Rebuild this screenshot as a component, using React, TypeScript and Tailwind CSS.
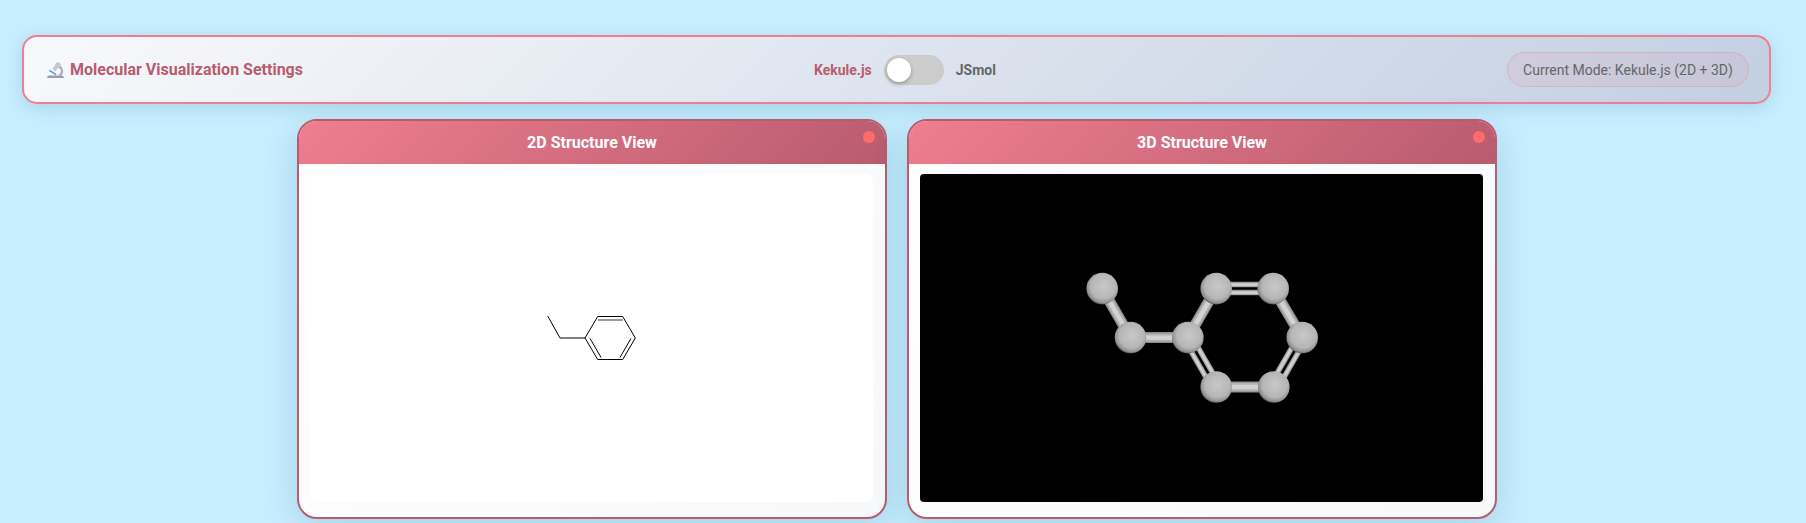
import React from "react";
import { useId } from "react";

const ATOMS: [number, number][] = [
  [20.2, 20.6],
  [48.5, 69.6],
  [105.8, 69.6],
  [134.2, 20.6],
  [191.2, 20.6],
  [220.2, 69.6],
  [191.8, 119],
  [134.2, 119],
];

// single bonds, then double bonds
const SINGLE = [[0, 1], [1, 2], [2, 3], [4, 5], [6, 7]];
const DOUBLE = [[3, 4], [5, 6], [7, 2]];

function Bond({ a, b, offset = 0, width = 11 }: { a: number; b: number; offset?: number; width?: number }) {
  const [x1, y1] = ATOMS[a];
  const [x2, y2] = ATOMS[b];
  const len = Math.hypot(x2 - x1, y2 - y1);
  const nx = (-(y2 - y1) / len) * offset;
  const ny = ((x2 - x1) / len) * offset;
  const line = { x1: x1 + nx, y1: y1 + ny, x2: x2 + nx, y2: y2 + ny };
  return (
    <g>
      <line {...line} stroke="#8c8c8c" strokeWidth={width} />
      <line {...line} stroke="#b2b2b2" strokeWidth={width * 0.76} />
      <line {...line} stroke="#d2d2d2" strokeWidth={width * 0.4} />
    </g>
  );
}

function Molecule3D() {
  const id = useId();
  return (
    <svg width="240" height="140" viewBox="0 0 240 140">
      <defs>
        <radialGradient id={id} cx="54%" cy="43%" r="58%">
          <stop offset="0%" stopColor="#c8c8c8" />
          <stop offset="68%" stopColor="#b6b6b6" />
          <stop offset="90%" stopColor="#929292" />
          <stop offset="100%" stopColor="#555555" />
        </radialGradient>
      </defs>
      {SINGLE.map(([a, b]) => (
        <Bond key={`${a}-${b}`} a={a} b={b} />
      ))}
      {DOUBLE.map(([a, b]) => (
        <g key={`${a}-${b}`}>
          <Bond a={a} b={b} offset={-4} width={5.5} />
          <Bond a={a} b={b} offset={4} width={5.5} />
        </g>
      ))}
      {ATOMS.map(([x, y], i) => (
        <circle key={i} cx={x} cy={y} r="15.8" fill={`url(#${id})`} />
      ))}
    </svg>
  );
}

function Molecule2D() {
  return (
    <svg width="100" height="56" viewBox="0 0 100 56" fill="none" stroke="#000" strokeWidth="1">
      <path d="M5.700 6 18 28H43L55.700 6.500H80.700L93.300 28 80.700 49.500H55.700L43 28" />
      <path d="M55.700 10H80.700" stroke="#555" strokeWidth="1.200" />
      <path d="M48 28.400 59 47.400" />
      <path d="M78 47.400 89 28.400" />
    </svg>
  );
}

function MicroscopeIcon() {
  return (
    <svg width="17" height="16" viewBox="0 0 17 16" className="shrink-0">
      <path d="M0 16c.2-1.600 1-2.600 2.400-2.600h12.200c1.400 0 2.200 1 2.400 2.600z" fill="#a197b3" />
      <path d="M10.500 4.500a4.600 4.600 0 0 1 1.500 8.900" fill="none" stroke="#b3aec0" strokeWidth="2.400" />
      <path d="M9.500 .6c1.700-1 3.700-.2 4.100 1.500.3 1.500-.5 2.800-2 3.300L8.200 9.400 5.400 7z" fill="#c9c6d3" />
      <path d="M2.400 8.400 9 12.600" fill="none" stroke="#3f9fe9" strokeWidth="1.700" />
    </svg>
  );
}

function StructureCard({ title, children }: { title: string; children: React.ReactNode }) {
  return (
    <div className="relative flex h-[400px] w-[590px] flex-col overflow-hidden rounded-[20px] border-2 border-[#b85c6e] bg-[linear-gradient(135deg,#ffffff,#f6f8fa)] shadow-[0_8px_32px_rgba(31,100,135,0.2)]">
      <div className="flex h-[43px] shrink-0 items-center justify-center bg-[linear-gradient(135deg,#ee7e90,#b85c6e)] text-center text-base font-bold text-white">
        {title}
      </div>
      <span className="absolute right-[10px] top-[10px] h-3 w-3 rounded-full bg-[#ff6b6b]" />
      {children}
    </div>
  );
}

export default function App() {
  return (
    <div className="h-[523px] overflow-hidden bg-[#c7eeff] font-['Roboto',sans-serif]">
      <div className="w-[1793px] px-[22px] pt-[35px]">
        <div className="flex h-[69px] items-center justify-between rounded-[15px] border-2 border-[#ee7e90] bg-[linear-gradient(135deg,#f8f9fb,#c3cfe2)] pl-[23px] pr-[20px] shadow-[0_4px_16px_rgba(31,100,135,0.18)]">
          <div className="flex items-center gap-[6px] text-base font-bold text-[#b85c6e]">
            <MicroscopeIcon />
            <span>Molecular Visualization Settings</span>
          </div>
          <div className="flex items-center gap-3 text-sm font-bold">
            <span className="text-[#b85c6e]">Kekule.js</span>
            <div className="relative h-[30px] w-[60px] rounded-full bg-[#cccccc]">
              <span className="absolute left-[3px] top-[3px] h-6 w-6 rounded-full bg-white shadow-[0_2px_4px_rgba(0,0,0,0.25)]" />
            </div>
            <span className="text-[#666666]">JSmol</span>
          </div>
          <div className="flex h-[35px] w-[242px] items-center justify-center rounded-full border border-[#ee7e90]/30 bg-[#ee7e90]/10 text-sm text-[#666666]">
            Current Mode: Kekule.js (2D + 3D)
          </div>
        </div>

        <div className="mt-[15px] flex justify-center gap-5 pl-px">
          <StructureCard title="2D Structure View">
            <div className="flex flex-1 pb-[15px] pl-[11px] pr-3 pt-[10px]">
              <div className="flex flex-1 items-center justify-center rounded-lg bg-white">
                <Molecule2D />
              </div>
            </div>
          </StructureCard>
          <StructureCard title="3D Structure View">
            <div className="flex flex-1 pb-[15px] pl-[11px] pr-3 pt-[10px]">
              <div className="flex flex-1 items-center justify-center rounded bg-black">
                <Molecule3D />
              </div>
            </div>
          </StructureCard>
        </div>
      </div>
    </div>
  );
}
